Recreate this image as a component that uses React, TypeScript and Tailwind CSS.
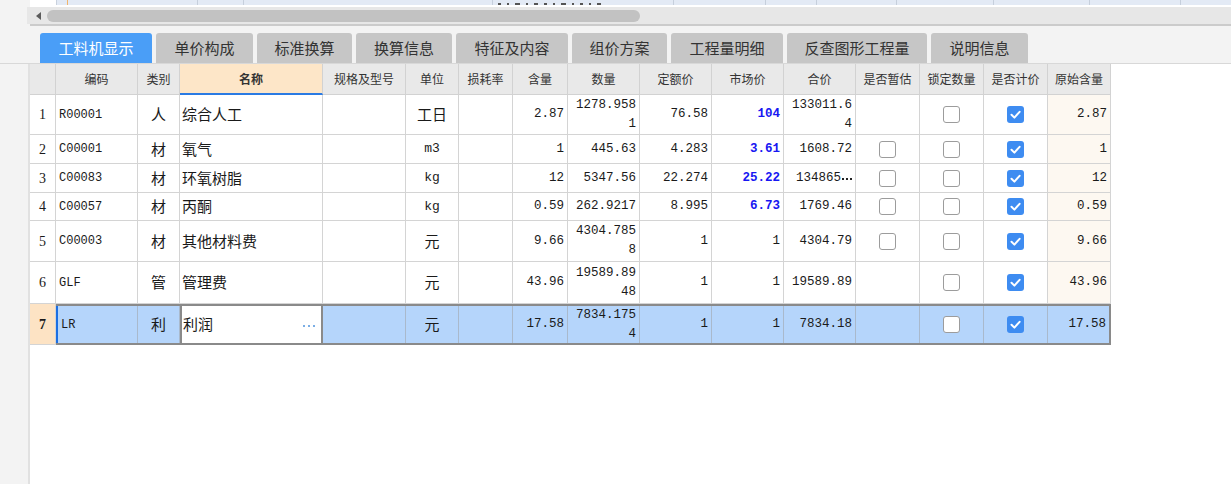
import React from 'react';

const W = [
  'w-[26px]', 'w-[82px]', 'w-[42px]', 'w-[143px]', 'w-[83px]', 'w-[53px]', 'w-[54px]', 'w-[55px]',
  'w-[72px]', 'w-[72px]', 'w-[72px]', 'w-[72px]', 'w-[64px]', 'w-[64px]', 'w-[64px]', 'w-[63px]',
];

const headers = ['', '编码', '类别', '名称', '规格及型号', '单位', '损耗率', '含量', '数量', '定额价', '市场价', '合价', '是否暂估', '锁定数量', '是否计价', '原始含量'];

const tabs: { label: string; w: string }[] = [
  { label: '工料机显示', w: 'w-[112px]' },
  { label: '单价构成', w: 'w-[97px]' },
  { label: '标准换算', w: 'w-[95px]' },
  { label: '换算信息', w: 'w-[96px]' },
  { label: '特征及内容', w: 'w-[112px]' },
  { label: '组价方案', w: 'w-[95px]' },
  { label: '工程量明细', w: 'w-[112px]' },
  { label: '反查图形工程量', w: 'w-[140px]' },
  { label: '说明信息', w: 'w-[97px]' },
];

type Row = {
  n: number;
  code: string;
  type: string;
  name: string;
  unit: string;
  unitMono: boolean;
  qty: string;
  amount: string[];
  quota: string;
  market: string;
  blue: boolean;
  total: string[];
  est: boolean | null;
  orig: string;
  h: string;
  sel?: boolean;
};

const rows: Row[] = [
  { n: 1, code: 'R00001', type: '人', name: '综合人工', unit: '工日', unitMono: false, qty: '2.87', amount: ['1278.958', '1'], quota: '76.58', market: '104', blue: true, total: ['133011.6', '4'], est: null, orig: '2.87', h: 'h-[40px]' },
  { n: 2, code: 'C00001', type: '材', name: '氧气', unit: 'm3', unitMono: true, qty: '1', amount: ['445.63'], quota: '4.283', market: '3.61', blue: true, total: ['1608.72'], est: false, orig: '1', h: 'h-[29px]' },
  { n: 3, code: 'C00083', type: '材', name: '环氧树脂', unit: 'kg', unitMono: true, qty: '12', amount: ['5347.56'], quota: '22.274', market: '25.22', blue: true, total: ['134865'], est: false, orig: '12', h: 'h-[29px]' },
  { n: 4, code: 'C00057', type: '材', name: '丙酮', unit: 'kg', unitMono: true, qty: '0.59', amount: ['262.9217'], quota: '8.995', market: '6.73', blue: true, total: ['1769.46'], est: false, orig: '0.59', h: 'h-[28px]' },
  { n: 5, code: 'C00003', type: '材', name: '其他材料费', unit: '元', unitMono: false, qty: '9.66', amount: ['4304.785', '8'], quota: '1', market: '1', blue: false, total: ['4304.79'], est: false, orig: '9.66', h: 'h-[41px]' },
  { n: 6, code: 'GLF', type: '管', name: '管理费', unit: '元', unitMono: false, qty: '43.96', amount: ['19589.89', '48'], quota: '1', market: '1', blue: false, total: ['19589.89'], est: null, orig: '43.96', h: 'h-[42px]' },
  { n: 7, code: 'LR', type: '利', name: '利润', unit: '元', unitMono: false, qty: '17.58', amount: ['7834.175', '4'], quota: '1', market: '1', blue: false, total: ['7834.18'], est: null, orig: '17.58', h: 'h-[41px]', sel: true },
];

const MONO = "font-['Liberation_Mono','Noto_Sans_CJK_SC',monospace]";

function Check({ on }: { on: boolean }) {
  if (on) {
    return (
      <div className="w-[17px] h-[17px] rounded-[3px] bg-[#3e8cf1] flex items-center justify-center">
        <svg width="17" height="17" viewBox="0 0 17 17">
          <path d="M4.5 8.8 L7.4 11.6 L12.6 5.8" fill="none" stroke="white" strokeWidth="2" strokeLinecap="round" strokeLinejoin="round" />
        </svg>
      </div>
    );
  }
  return <div className="w-[17px] h-[17px] rounded-[3px] border border-[#9c9c9c] bg-white" />;
}

function Num({ lines, className = '', ellipsis = false }: { lines: string[]; className?: string; ellipsis?: boolean }) {
  return (
    <div className={`flex flex-col items-end leading-[19px] text-[12.5px] ${MONO} ${className}`}>
      {lines.map((l, i) => (
        <span key={i} className="flex items-center">
          {l}
          {ellipsis && (
            <span className="flex gap-[2px] items-center ml-[1px] mt-[1px]">
              <span className="w-[2px] h-[2px] bg-[#222]" />
              <span className="w-[2px] h-[2px] bg-[#222]" />
              <span className="w-[2px] h-[2px] bg-[#222]" />
            </span>
          )}
        </span>
      ))}
    </div>
  );
}

function TableRow({ r }: { r: Row }) {
  const sel = !!r.sel;
  const cellB = sel ? 'border-r border-[#a9b9cc]' : 'border-r border-b border-[#d4d4d4]';
  const base = `shrink-0 h-full flex items-center ${cellB}`;
  const bg = sel ? 'bg-[#b5d5fb]' : 'bg-white';
  const cells = (
    <>
      <div className={`${W[1]} ${base} ${bg} pl-[3px] text-[12px] ${MONO} ${sel ? 'border-l-2 border-l-[#1c6fe3]' : ''}`}>{r.code}</div>
      <div className={`${W[2]} ${base} ${bg} justify-center text-[15px]`}>{r.type}</div>
      {sel ? (
        <div className={`${W[3]} shrink-0 h-full flex items-center justify-between bg-white border-x-2 border-[#8a8a8a] pl-[1px] pr-[6px] text-[15px]`}>
          <span>{r.name}</span>
          <span className="flex gap-[3px] items-center mt-[2px]">
            <span className="w-[2px] h-[2px] bg-[#4f93dc] rounded-full" />
            <span className="w-[2px] h-[2px] bg-[#4f93dc] rounded-full" />
            <span className="w-[2px] h-[2px] bg-[#4f93dc] rounded-full" />
          </span>
        </div>
      ) : (
        <div className={`${W[3]} ${base} ${bg} pl-[2px] text-[15px]`}>{r.name}</div>
      )}
      <div className={`${W[4]} ${base} ${bg}`} />
      <div className={`${W[5]} ${base} ${bg} justify-center ${r.unitMono ? `text-[13px] ${MONO}` : 'text-[15px]'}`}>{r.unit}</div>
      <div className={`${W[6]} ${base} ${bg}`} />
      <div className={`${W[7]} ${base} ${bg} justify-end pr-[3px]`}>
        <Num lines={[r.qty]} />
      </div>
      <div className={`${W[8]} ${base} ${bg} justify-end pr-[3px]`}>
        <Num lines={r.amount} />
      </div>
      <div className={`${W[9]} ${base} ${bg} justify-end pr-[3px]`}>
        <Num lines={[r.quota]} />
      </div>
      <div className={`${W[10]} ${base} ${bg} justify-end pr-[3px]`}>
        <Num lines={[r.market]} className={r.blue ? 'text-[#1717f2] font-bold' : ''} />
      </div>
      <div className={`${W[11]} ${base} ${bg} justify-end pr-[3px]`}>
        <Num lines={r.total} ellipsis={r.n === 3} />
      </div>
      <div className={`${W[12]} ${base} ${bg} justify-center`}>{r.est !== null && <Check on={r.est} />}</div>
      <div className={`${W[13]} ${base} ${bg} justify-center`}>
        <Check on={false} />
      </div>
      <div className={`${W[14]} ${base} ${bg} justify-center`}>
        <Check on={true} />
      </div>
      <div className={`${sel ? 'w-[61px] bg-[#b5d5fb]' : `${W[15]} bg-[#fdf8f1] border-r border-b border-[#d4d4d4]`} shrink-0 h-full flex items-center justify-end pr-[3px]`}>
        <Num lines={[r.orig]} />
      </div>
    </>
  );
  return (
    <div className={`flex ${r.h} text-[#1a1a1a]`}>
      <div
        className={`${W[0]} shrink-0 h-full flex items-center justify-center border-r border-b border-[#d4d4d4] font-['Liberation_Serif',serif] text-[14px] ${
          sel ? 'bg-[#fde3c4] font-bold' : 'bg-white'
        }`}
      >
        {r.n}
      </div>
      {sel ? <div className="flex h-full border-y-2 border-r-2 border-[#8a8a8a]">{cells}</div> : cells}
    </div>
  );
}

const stripCells = ['w-[141px]', 'w-[46px]', 'w-[249px]', 'w-[181px]', 'w-[92px]', 'w-[51px]', 'w-[80px]', 'w-[97px]', 'w-[96px]', 'w-[91px]'];
const marks = ['w-[3px]', 'w-[2px]', 'w-[5px]', 'w-[2px]', 'w-[4px]', 'w-[3px]', 'w-[2px]', 'w-[5px]', 'w-[2px]', 'w-[3px]', 'w-[2px]', 'w-[4px]'];

export default function App() {
  return (
    <div className="w-[1231px] h-[484px] bg-[#f3f3f3] overflow-hidden font-['Noto_Sans_CJK_SC',sans-serif] text-[#222]">
      {/* cut-off row above */}
      <div className="h-[5px] flex pl-[30px] overflow-hidden">
        <div className="w-[27px] shrink-0 bg-white border-r border-[#c9d1dd]" />
        {stripCells.map((w, i) => (
          <div key={i} className={`${w} shrink-0 h-full bg-[#e3eaf5] border-r border-[#c6cfdc] overflow-hidden relative`}>
            {i === 0 && <div className="absolute left-[10px] top-0 w-[1px] h-full bg-[#f2b56b]" />}
            {i === 3 && (
              <div className="flex items-end h-full pl-[5px] gap-[6px]">
                {marks.map((m, k) => (
                  <span key={k} className={`${m} h-[2px] bg-[#555]`} />
                ))}
              </div>
            )}
          </div>
        ))}
        <div className="flex-1 h-full bg-[#e3eaf5]" />
      </div>
      <div className="h-[2px] ml-[30px] bg-white" />
      {/* horizontal scrollbar */}
      <div className="h-[17px] ml-[27px] bg-[#e7e7e7] flex items-center">
        <div className="ml-[9px] w-0 h-0 border-y-[4px] border-y-transparent border-r-[5px] border-r-[#5c5c5c]" />
        <div className="ml-[6px] w-[593px] h-[12px] rounded-full bg-[#c2c2c2]" />
      </div>
      <div className="h-[2px] ml-[30px] bg-[#cbcbcb]" />
      {/* tabs */}
      <div className="h-[38px] pt-[7px] pl-[40px] border-b border-[#d8d8d8] flex gap-[4px]">
        {tabs.map((t, i) => (
          <div
            key={t.label}
            className={`${t.w} h-[30px] rounded-t-[3px] flex items-center justify-center text-[15px] ${
              i === 0 ? 'bg-[#4a9ef7] text-white' : 'bg-[#c6c6c6] text-[#333]'
            }`}
          >
            {t.label}
          </div>
        ))}
      </div>
      {/* body */}
      <div className="flex h-[420px]">
        <div className="w-[30px] shrink-0 h-full bg-[#f3f3f3] border-r-2 border-[#e1e1e1]" />
        <div className="flex-1 h-full bg-white">
          <div className="flex h-[31px] text-[12px] text-[#333]">
            {headers.map((h, i) => (
              <div
                key={i}
                className={`${W[i]} shrink-0 h-full flex items-center justify-center whitespace-nowrap ${
                  i === 3
                    ? 'bg-[#fde6c8] font-bold border-r border-[#d2d2d2] border-b-2 border-b-[#2b7be3]'
                    : 'bg-[#e9e9e9] border-r border-b border-[#d2d2d2]'
                }`}
              >
                {h}
              </div>
            ))}
          </div>
          {rows.map((r) => (
            <TableRow key={r.n} r={r} />
          ))}
        </div>
      </div>
    </div>
  );
}
